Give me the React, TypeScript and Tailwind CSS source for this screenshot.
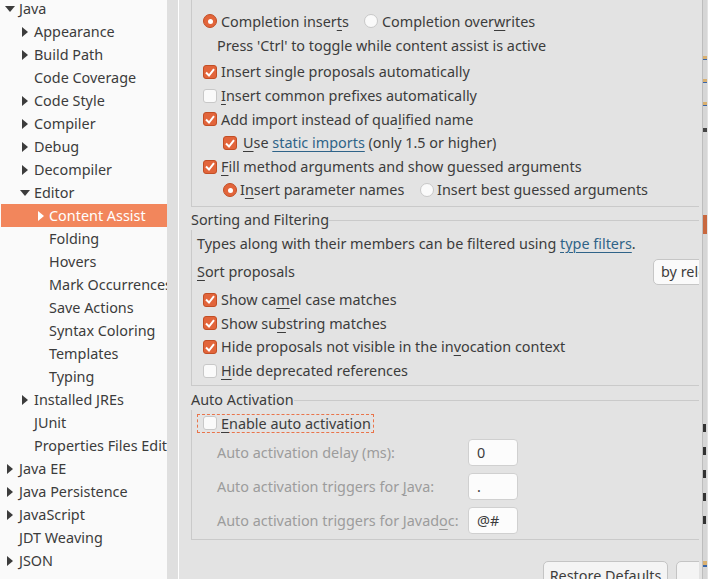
import { ReactNode } from "react"

type Node = { label: string; level: number; arrow?: "open" | "closed"; selected?: boolean }

const tree: Node[] = [
  { label: "Java", level: 0, arrow: "open" },
  { label: "Appearance", level: 1, arrow: "closed" },
  { label: "Build Path", level: 1, arrow: "closed" },
  { label: "Code Coverage", level: 1 },
  { label: "Code Style", level: 1, arrow: "closed" },
  { label: "Compiler", level: 1, arrow: "closed" },
  { label: "Debug", level: 1, arrow: "closed" },
  { label: "Decompiler", level: 1, arrow: "closed" },
  { label: "Editor", level: 1, arrow: "open" },
  { label: "Content Assist", level: 2, arrow: "closed", selected: true },
  { label: "Folding", level: 2 },
  { label: "Hovers", level: 2 },
  { label: "Mark Occurrences", level: 2 },
  { label: "Save Actions", level: 2 },
  { label: "Syntax Coloring", level: 2 },
  { label: "Templates", level: 2 },
  { label: "Typing", level: 2 },
  { label: "Installed JREs", level: 1, arrow: "closed" },
  { label: "JUnit", level: 1 },
  { label: "Properties Files Editor", level: 1 },
  { label: "Java EE", level: 0, arrow: "closed" },
  { label: "Java Persistence", level: 0, arrow: "closed" },
  { label: "JavaScript", level: 0, arrow: "closed" },
  { label: "JDT Weaving", level: 0 },
  { label: "JSON", level: 0, arrow: "closed" },
  { label: "", level: 0, arrow: "closed" },
]

const indent = ["pl-[4px]", "pl-[19px]", "pl-[34px]"]

function Arrow({ kind, white }: { kind?: "open" | "closed"; white?: boolean }) {
  const fill = white ? "#ffffff" : "#3c3c3c"
  return (
    <span className="flex h-full w-[15px] shrink-0 items-center">
      {kind === "open" && (
        <svg width="10" height="6" viewBox="0 0 10 6" className="ml-[1px]">
          <path d="M0 0 L10 0 L5 6 Z" fill={fill} />
        </svg>
      )}
      {kind === "closed" && (
        <svg width="6" height="10" viewBox="0 0 6 10" className="ml-[3px]">
          <path d="M0 0 L6 5 L0 10 Z" fill={fill} />
        </svg>
      )}
    </span>
  )
}

function Check({ on }: { on?: boolean }) {
  if (on)
    return (
      <span className="flex h-[14px] w-[14px] shrink-0 items-center justify-center rounded-[3px] border border-[#c24e25] bg-[#e2653b]">
        <svg width="10" height="9" viewBox="0 0 10 9">
          <path d="M1 4.5 L4 7.5 L9 1.2" stroke="#fff" strokeWidth="2" fill="none" />
        </svg>
      </span>
    )
  return <span className="h-[14px] w-[14px] shrink-0 rounded-[3px] border border-[#c8c8c8] bg-[#fafafa]" />
}

function Radio({ on }: { on?: boolean }) {
  if (on)
    return (
      <span className="flex h-[14px] w-[14px] shrink-0 items-center justify-center rounded-full border border-[#c24e25] bg-[#e2653b]">
        <span className="h-[5px] w-[5px] rounded-full bg-white" />
      </span>
    )
  return <span className="h-[14px] w-[14px] shrink-0 rounded-full border border-[#c8c8c8] bg-[#fafafa]" />
}

function U({ children }: { children: ReactNode }) {
  return <u className="decoration-1 underline-offset-[3px]">{children}</u>
}

function CheckRow({ on, children }: { on?: boolean; children: ReactNode }) {
  return (
    <div className="flex h-[23.6px] items-center gap-[4px] whitespace-nowrap pt-[1px]">
      <Check on={on} />
      <span>{children}</span>
    </div>
  )
}

function Field({ label, value }: { label: ReactNode; value: string }) {
  return (
    <div className="flex h-[27px] items-center pl-[25px]">
      <span className="w-[251px] shrink-0 whitespace-nowrap text-[#9c9c9c]">{label}</span>
      <span className="flex h-[27px] w-[50px] shrink-0 items-center rounded-[4px] border border-[#d0d0d0] bg-[#fcfcfc] pl-[8px]">
        {value}
      </span>
    </div>
  )
}

export default function App() {
  return (
    <div
      className="flex h-[579px] w-[708px] overflow-hidden bg-[#e3e3e3] text-[14.4px] text-[#3c3c3c]"
      style={{ fontFamily: '"Noto Sans", "Open Sans", sans-serif' }}
    >
      {/* Tree */}
      <aside className="w-[167px] shrink-0 overflow-hidden bg-[#fafafa]">
        <div className="mt-[-3px]">
          {tree.map((n, i) => (
            <div
              key={i}
              className={`flex h-[23px] items-center whitespace-nowrap ${indent[n.level]} ${
                n.selected ? "ml-[1px] bg-[#f2865c] text-white" : ""
              }`}
            >
              <Arrow kind={n.arrow} white={n.selected} />
              <span className={n.selected ? "ml-[-1px]" : ""}>{n.label}</span>
            </div>
          ))}
        </div>
      </aside>

      {/* Sash */}
      <div className="w-[12px] shrink-0 border-r border-white bg-[#dfdfdf]" />

      {/* Page */}
      <main className="w-[520px] shrink-0 overflow-hidden">
        <div className="w-[560px] pl-[12px]">
          {/* Content assist group (top scrolled away) */}
          <div className="border-b border-l border-[#cacaca] pb-[4px] pl-[11px] pt-[9px]">
            <div className="flex h-[24px] items-center whitespace-nowrap pt-[1px]">
              <div className="flex w-[161px] shrink-0 items-center gap-[4px]">
                <Radio on />
                <span>
                  Completion inser<U>t</U>s
                </span>
              </div>
              <div className="flex items-center gap-[4px]">
                <Radio />
                <span>
                  Completion over<U>w</U>rites
                </span>
              </div>
            </div>
            <div className="flex h-[24px] items-center whitespace-nowrap pl-[14px] pt-[1px]">
              Press 'Ctrl' to toggle while content assist is active
            </div>
            <div className="mt-[3px]">
              <CheckRow on>Insert single proposals automatically</CheckRow>
              <CheckRow>
                <U>I</U>nsert common prefixes automatically
              </CheckRow>
              <CheckRow on>
                Add import instead of qua<U>l</U>ified name
              </CheckRow>
              <div className="flex h-[23.6px] items-center gap-[6px] whitespace-nowrap pl-[20px] pt-[1px]">
                <Check on />
                <span>
                  <U>U</U>se <span className="text-[#2f6388] underline decoration-1 underline-offset-[3px]">static imports</span>{" "}
                  (only 1.5 or higher)
                </span>
              </div>
              <CheckRow on>
                <U>F</U>ill method arguments and show guessed arguments
              </CheckRow>
              <div className="flex h-[23.6px] items-center whitespace-nowrap pl-[20px] pt-[1px]">
                <div className="flex w-[197px] shrink-0 items-center gap-[3px]">
                  <Radio on />
                  <span>
                    I<U>n</U>sert parameter names
                  </span>
                </div>
                <div className="flex items-center gap-[3px]">
                  <Radio />
                  <span>Insert best guessed arguments</span>
                </div>
              </div>
            </div>
          </div>

          {/* Sorting and Filtering */}
          <div className="mt-[3px] flex h-[20px] items-center">
            <span className="whitespace-nowrap">Sorting and Filtering</span>
            <span className="mt-[2px] flex-1 border-t border-[#cacaca]" />
          </div>
          <div className="border-b border-l border-[#cacaca] pb-[3px] pt-[2px]">
            <div className="flex h-[24px] items-center whitespace-nowrap pl-[5px]">
              <span>
                Types along with their members can be filtered using{" "}
                <span className="text-[#2f6388] underline decoration-1 underline-offset-[3px]">type filters</span>.
              </span>
            </div>
            <div className="mt-[3px] flex h-[26px] items-center whitespace-nowrap pl-[5px]">
              <span className="w-[456px] shrink-0">
                <U>S</U>ort proposals
              </span>
              <span className="flex h-[26px] w-[100px] shrink-0 items-center rounded-[5px] border border-[#c6c6c6] bg-[#fafafa] pl-[7px]">
                by relevance
              </span>
            </div>
            <div className="mt-[3px] pl-[11px]">
              <CheckRow on>
                Show ca<U>m</U>el case matches
              </CheckRow>
              <CheckRow on>
                Show su<U>b</U>string matches
              </CheckRow>
              <CheckRow on>
                Hide proposals not visible in the in<U>v</U>ocation context
              </CheckRow>
              <CheckRow>
                <U>H</U>ide deprecated references
              </CheckRow>
            </div>
          </div>

          {/* Auto Activation */}
          <div className="mt-[4px] flex h-[20px] items-center">
            <span className="whitespace-nowrap">Auto Activation</span>
            <span className="mt-[2px] flex-1 border-t border-[#cacaca]" />
          </div>
          <div className="border-b border-l border-[#cacaca] pb-[5px] pt-[4px]">
            <div className="ml-[5px] flex h-[19px] w-[177px] items-center gap-[4px] whitespace-nowrap border border-dashed border-[#e9744a] pl-[5px]">
              <Check />
              <span>
                <U>E</U>nable auto activation
              </span>
            </div>
            <div className="mt-[6px] flex flex-col gap-[7px]">
              <Field label="Auto activation delay (ms):" value="0" />
              <Field
                label={
                  <>
                    Auto activation triggers for <U>J</U>ava:
                  </>
                }
                value="."
              />
              <Field
                label={
                  <>
                    Auto activation triggers for Javad<U>o</U>c:
                  </>
                }
                value="@#"
              />
            </div>
          </div>

          {/* Buttons */}
          <div className="mt-[21px] flex gap-[8px] pl-[352px]">
            <button className="h-[32px] w-[125px] shrink-0 whitespace-nowrap rounded-[5px] border border-[#c4c4c4] bg-[#f4f4f4] pb-[2px] text-[#3c3c3c]">
              Restore Defaults
            </button>
            <button className="h-[32px] w-[125px] shrink-0 rounded-[5px] border border-[#c4c4c4] bg-[#f4f4f4] text-[#3c3c3c]">
              Apply
            </button>
          </div>
        </div>
      </main>

      {/* Right edge */}
      <div className="w-[4px] shrink-0 border-r border-[#bdbdbd] bg-[#e3e3e3]" />
      <div className="relative w-[4px] shrink-0 bg-[#d6d6d6]">
        <div className="absolute left-0 top-[56px] h-[4px] w-[4px] border-b border-[#3a66a8] bg-[#d9b070]" />
        <div className="absolute left-0 top-[79px] h-[4px] w-[4px] border-b border-[#3a66a8] bg-[#d9b070]" />
        <div className="absolute left-0 top-[102px] h-[4px] w-[4px] border-b border-[#3a66a8] bg-[#d9b070]" />
        <div className="absolute left-0 top-[128px] h-[4px] w-[4px] bg-[#444]" />
        <div className="absolute left-0 top-[215px] h-[19px] w-[4px] bg-[#c8683f]" />
        <div className="absolute left-0 top-[424px] h-[8px] w-[3px] bg-[#333]" />
        <div className="absolute left-0 top-[447px] h-[8px] w-[3px] bg-[#333]" />
        <div className="absolute left-0 top-[470px] h-[8px] w-[3px] bg-[#333]" />
        <div className="absolute left-0 top-[493px] h-[8px] w-[3px] bg-[#333]" />
        <div className="absolute left-0 top-[516px] h-[8px] w-[3px] bg-[#333]" />
        <div className="absolute left-0 top-[561px] h-[6px] w-[4px] border-b-2 border-[#3a66a8] bg-[#d9b070]" />
      </div>
    </div>
  )
}
